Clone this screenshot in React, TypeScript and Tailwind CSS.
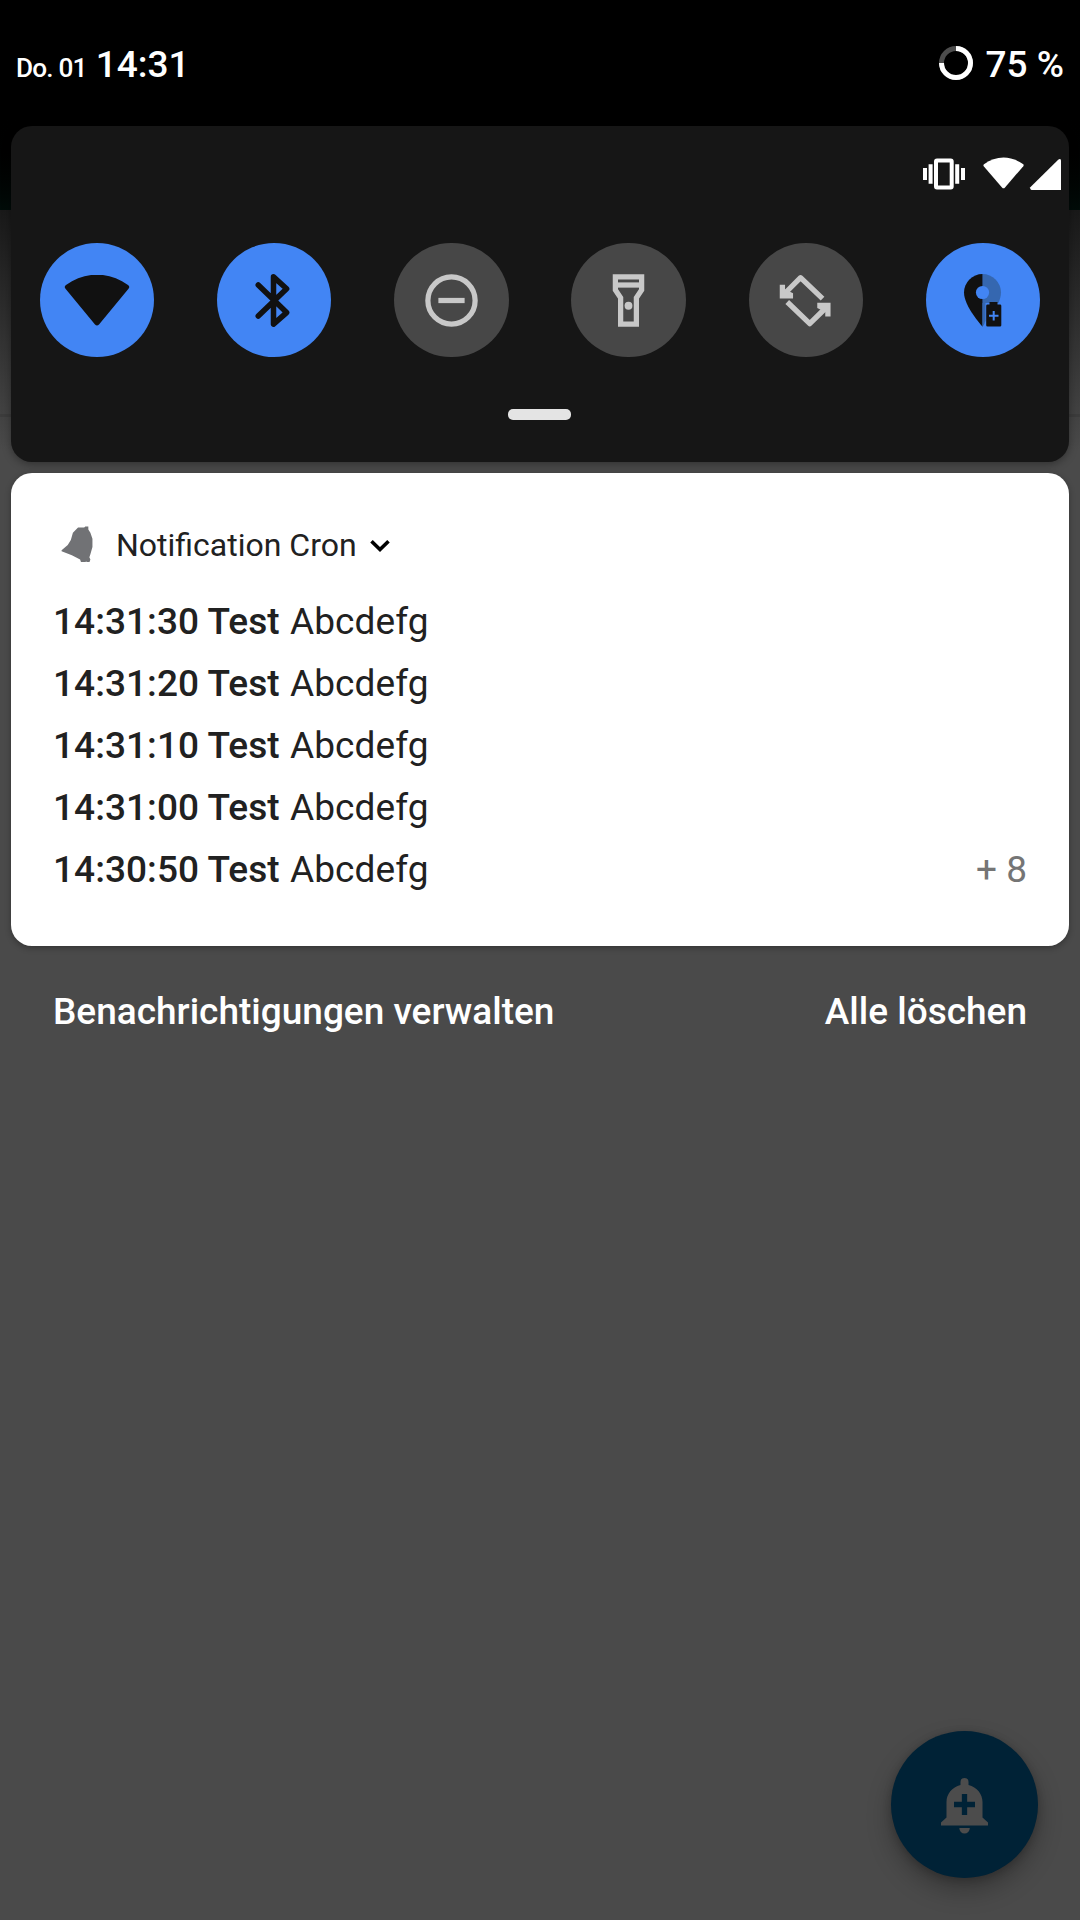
import type { ReactNode } from "react";

const notifications = ["14:31:30", "14:31:20", "14:31:10", "14:31:00", "14:30:50"];

function Tile({ active = false, children }: { active?: boolean; children: ReactNode }) {
  return (
    <button
      className={
        "flex size-[114.5px] items-center justify-center rounded-full pt-[1.5px] pr-[0.5px] " +
        (active ? "bg-[#4285f4] text-[#111111]" : "bg-[#474747] text-[#c8c8c8]")
      }
    >
      {children}
    </button>
  );
}

function BatteryRing() {
  return (
    <svg className="mb-[4px] size-[34px]" viewBox="0 0 34 34" fill="none" strokeWidth="5">
      <circle cx="17" cy="17" r="14.5" stroke="#4d4d4d" />
      <path d="M17 2.5A14.5 14.5 0 1 1 2.5 17" stroke="#fff" />
    </svg>
  );
}

function StatusIcons() {
  return (
    <svg className="h-[34px] w-[140px]" viewBox="922 156 140 34" fill="#fff">
      <path d="M923 168h4v12h-4zM928.6 164.300h4v19.400h-4zM955.200 164.300h4v19.400h-4zM961 168h4v12h-4z" />
      <rect x="936" y="160.400" width="15.700" height="27.200" rx="1" fill="none" stroke="#fff" strokeWidth="4" />
      <path d="M984 164.300C996 155.300 1011 155.300 1023.300 164.300Q1024 165.200 1023.300 166.200L1005 187.500Q1003.500 189.200 1002 187.500L983.700 166.200Q983 165.200 984 164.300Z" />
      <path d="M1061 160.300V190H1031.500Q1029.500 189.500 1030.300 187.200L1058.200 159.700Q1060.500 158.300 1061 160.300Z" />
    </svg>
  );
}

export default function App() {
  return (
    <main className="relative flex h-[1920px] w-[1080px] flex-col overflow-hidden bg-[#4a4a4a] font-['Roboto',sans-serif]">
      {/* Dimmed app behind the shade */}
      <div className="absolute inset-x-0 top-0 h-[210px] bg-linear-to-b from-black from-50% to-[#000c09]" />
      <div className="absolute inset-x-0 top-[210px] h-[240px] bg-linear-to-b from-[#191919] to-[#4a4a4a]" />
      <div className="absolute inset-x-0 top-[414px] h-[3px] bg-[#3c3c3c]" />

      <header className="relative flex h-[126px] justify-between pr-4 pl-4 text-white">
        <div className="mt-[43px] flex h-[44px] items-baseline font-medium">
          <span className="text-[26.200px] leading-[44px] tracking-[-0.8px]">Do. 01</span>
          <span className="ml-[9px] text-[37px] leading-[44px]">14:31</span>
        </div>
        <div className="mt-[43px] flex h-[44px] items-center gap-[13px]">
          <BatteryRing />
          <span className="text-[37px] leading-[44px] font-medium">75 %</span>
        </div>
      </header>

      <section className="relative mx-[11px] flex h-[336px] flex-col rounded-[21px] bg-[#161616] shadow-[0_2px_8px_rgba(0,0,0,0.35)]">
        <div className="flex h-[116.5px] justify-end pt-[30px] pr-[7px]">
          <StatusIcons />
        </div>
        <div className="flex justify-between pr-[28.5px] pl-[28.5px]">
          <Tile active>
            <svg className="h-[52px] w-[66px]" viewBox="64 274.500 66 52" fill="currentColor">
              <path d="M66 284.500C85 270.700 109 270.700 128 284.500Q130.300 286 128.500 288.200L99 324Q97 326.200 95 324L65.500 288.200Q63.700 286 66 284.500Z" />
            </svg>
          </Tile>
          <Tile active>
            <svg className="size-[63px]" viewBox="0 0 24 24" fill="none" stroke="currentColor" strokeWidth="2.100" strokeLinecap="round" strokeLinejoin="round">
              <path d="M6.200 6.100 17 16.600 12 21V3L17 7.500 6.200 17.900" />
            </svg>
          </Tile>
          <Tile>
            <svg className="size-[63px]" viewBox="0 0 24 24" fill="none" stroke="currentColor" strokeWidth="2">
              <circle cx="12" cy="12" r="9" />
              <path d="M7 12h10" />
            </svg>
          </Tile>
          <Tile>
            <svg className="size-[63px]" viewBox="0 0 24 24" fill="none" stroke="currentColor" strokeWidth="2">
              <path d="M7 3h10v5l-2 3v10H9V11L7 8z" />
              <path d="M7 6.100h10" />
              <circle cx="12" cy="14" r="1.500" fill="currentColor" stroke="none" />
            </svg>
          </Tile>
          <Tile>
            <svg className="size-[63px]" viewBox="773.750 269 63 63" fill="none" stroke="currentColor" strokeWidth="5.300" strokeLinejoin="round">
              <path d="M783 295l17.300-17.300 22 21M787 302l22.500 21.700L827 306.500" />
              <path d="M779.500 284.700h5.300v4.500l8 4v5.300h-13.300zM830.300 316.500H825v-4.500l-8-4v-5.300h13.300z" fill="currentColor" stroke="none" />
            </svg>
          </Tile>
          <Tile active>
            <svg className="size-[63px]" viewBox="951.500 269 63 63" fill="currentColor">
              <path d="M983 274a18.500 18.500 0 0 1 18.500 18.500c0 14-18.500 34-18.500 34z" fill="#3567b0" />
              <path d="M983 274a18.500 18.500 0 0 0-18.500 18.500C964.500 306.500 983 326.700 983 326.700z" />
              <circle cx="983" cy="292.500" r="6.600" fill="#4285f4" />
              <path d="M985 303h18v24h-18z" fill="#4285f4" />
              <path d="M983 303h3v18l-3 5z" fill="#3567b0" />
              <path d="M990 302h8v2.500h2.500q1.300 0 1.300 1.300v19.500q0 1.300-1.300 1.300h-12.500q-1.300 0-1.300-1.300v-19.500q0-1.300 1.300-1.300h2z" />
              <path d="M994.200 311v9.500M989.500 315.800h9.500" stroke="#4285f4" strokeWidth="2" />
            </svg>
          </Tile>
        </div>
        <div className="mt-[52px] mr-[1px] h-[11px] w-[63px] self-center rounded-[5px] bg-[#e4e4e4]" />
      </section>

      <section className="relative mx-[11px] mt-[11px] flex h-[473px] flex-col rounded-[21px] bg-white px-[42px] text-[#212121] shadow-[0_2px_6px_rgba(0,0,0,0.3)]">
        <div className="mt-[50px] flex h-[44px] items-center">
          <svg className="mb-[3px] ml-[7px] h-[36px] w-[33px]" viewBox="60.500 525.500 32 35" fill="#717275">
            <path d="M82 527h2l1-1h3v3l2 3 2 6v8l-2 7-1 3 1 2-1 3h-2l-1-1-2 1h-3l-1-3-8-4-10-4v-1l6-5 3-5 2-7 5-5z" />
          </svg>
          <span className="ml-[23px] text-[32px] leading-[44px]">Notification Cron</span>
          <svg className="ml-[12.500px] h-[14px] w-[22px]" viewBox="0 0 22 14" fill="none" stroke="#000" strokeWidth="3.600">
            <path d="M2.500 3.200 11 11.500 19.500 3.200" />
          </svg>
        </div>
        <ul className="mt-[24px] text-[37px] leading-[62px]">
          {notifications.map((time, i) => (
            <li key={time} className="flex justify-between">
              <span className="tracking-[0.1px]">
                <b className="mr-[1px] font-medium tracking-[0.05px]">{time} Test</b> Abcdefg
              </span>
              {i === notifications.length - 1 && <span className="text-[#757575]">+ 8</span>}
            </li>
          ))}
        </ul>
      </section>

      <nav className="relative mt-[35px] flex justify-between px-[53px] text-[37px] leading-[62px] font-medium text-white">
        <button>Benachrichtigungen verwalten</button>
        <button>Alle löschen</button>
      </nav>

      <button className="absolute right-[42px] bottom-[42px] flex size-[147px] items-center justify-center rounded-full bg-[#002236] shadow-[0_12px_24px_rgba(0,0,0,0.28),0_2px_8px_rgba(0,0,0,0.2)]">
        <svg className="size-[63px]" viewBox="933 1773 63 63" fill="#4c4c4c">
          <path d="M960.500 1785v-3a4 4 0 0 1 8 0v3C977 1787 982.500 1794 982.500 1802v15.500l5.500 5v3h-47v-3l5.500-5V1802C946.500 1794 952 1787 960.500 1785z" />
          <path d="M959.300 1828h10.500a5.250 5.500 0 0 1-10.500 0z" />
          <path d="M964.500 1794v21M954 1804.500h21" stroke="#002236" strokeWidth="5.300" />
        </svg>
      </button>
    </main>
  );
}
